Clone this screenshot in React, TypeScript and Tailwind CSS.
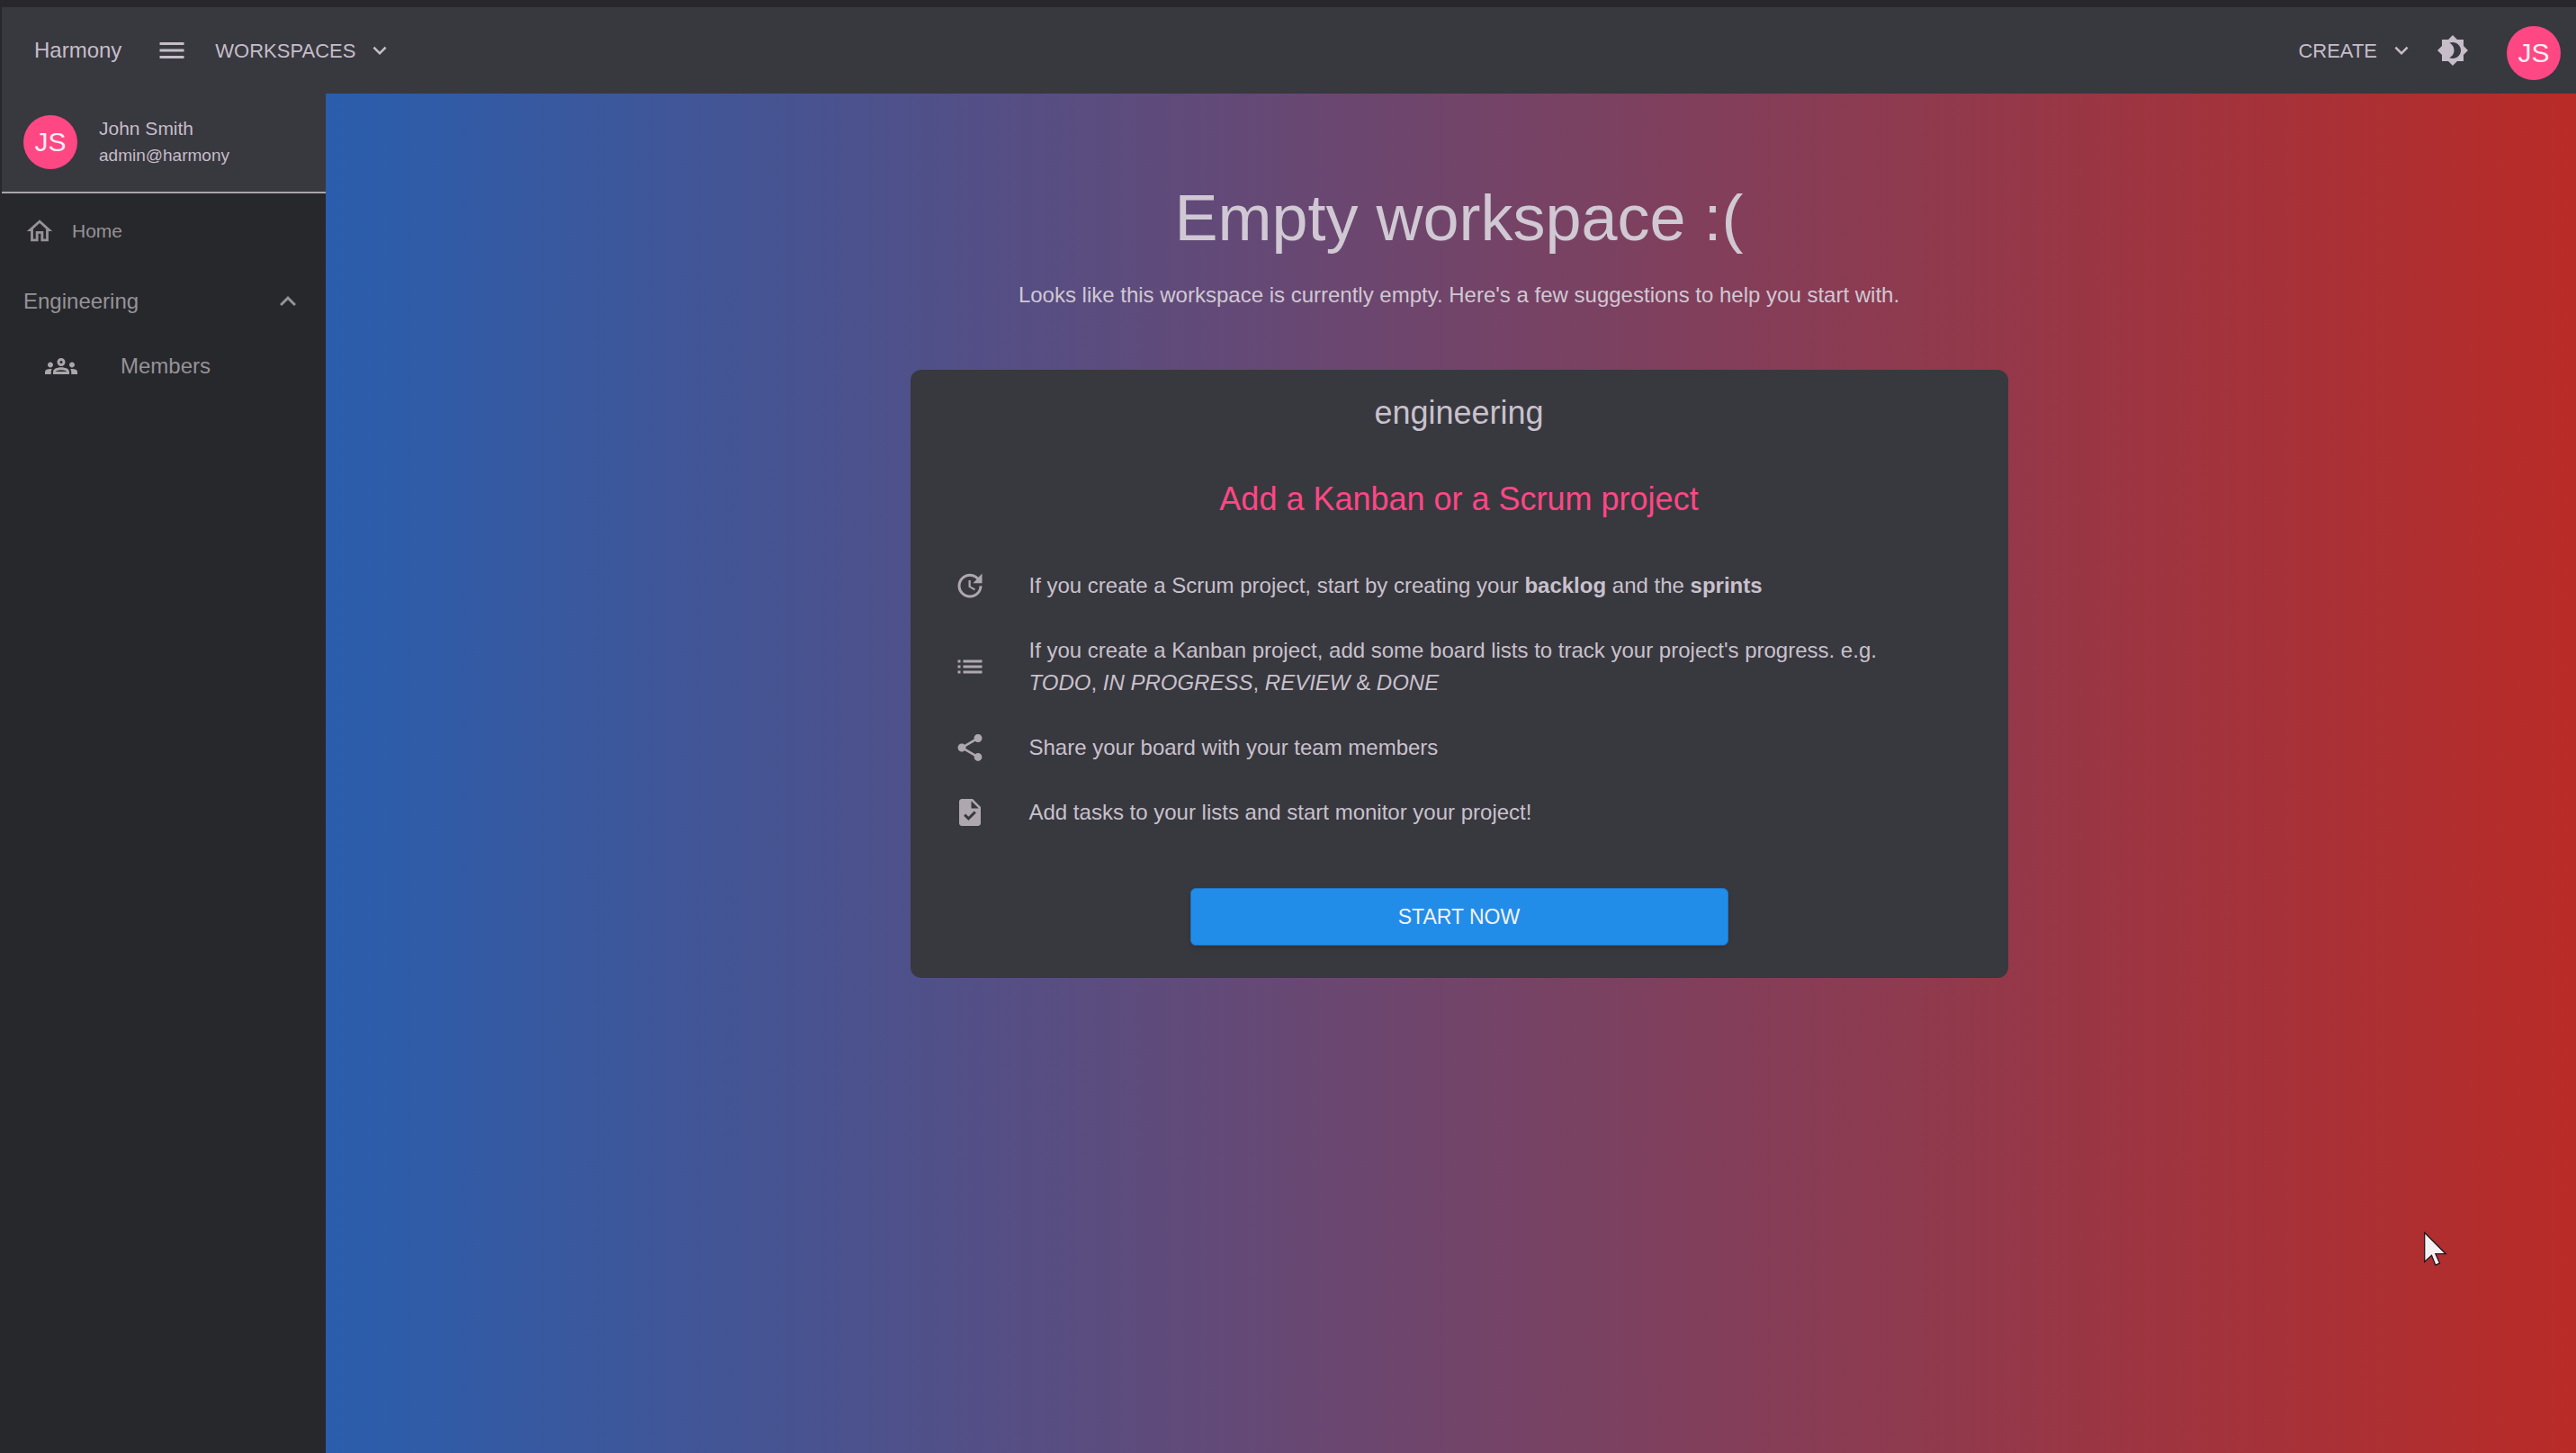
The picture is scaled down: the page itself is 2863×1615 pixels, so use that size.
import type { ReactNode } from "react";
import {
  MdBrightness4,
  MdExpandLess,
  MdExpandMore,
  MdList,
  MdMenu,
  MdOutlineGroups,
  MdOutlineHome,
  MdShare,
  MdTask,
  MdUpdate,
} from "react-icons/md";

function Avatar() {
  return (
    <span className="flex size-[60px] shrink-0 items-center justify-center rounded-full bg-[#ff4784] text-[30px] leading-none text-[#f7eef3]">
      JS
    </span>
  );
}

function TopBar() {
  return (
    <header className="flex h-24 items-center justify-between bg-[#38383f] pr-[17px] pl-9 text-[#c6bdc9]">
      <div className="flex items-center">
        <a href="#" className="text-2xl">
          Harmony
        </a>
        <button type="button" aria-label="Toggle menu" className="ml-[38px]">
          <MdMenu size={36} />
        </button>
        <button type="button" className="ml-[30px] flex items-center gap-3 text-[22px]">
          WORKSPACES
          <MdExpandMore size={30} />
        </button>
      </div>
      <div className="flex items-center">
        <button type="button" className="flex items-center gap-3 text-[22px]">
          CREATE
          <MdExpandMore size={30} />
        </button>
        <button type="button" aria-label="Toggle theme" className="ml-6">
          <MdBrightness4 size={36} />
        </button>
        <button type="button" aria-label="Account" className="mt-[6px] ml-[42px]">
          <Avatar />
        </button>
      </div>
    </header>
  );
}

function Sidebar() {
  return (
    <aside className="flex w-[360px] shrink-0 flex-col bg-[#27282c] text-[#969296]">
      <div className="flex h-[111px] items-start gap-6 border-b-2 border-[#a9a5aa] bg-[#38383f] pt-6 pl-6 text-[#c6bdc9]">
        <Avatar />
        <div>
          <p className="text-[21px] leading-[30px]">John Smith</p>
          <p className="text-[19px] leading-[30px]">admin@harmony</p>
        </div>
      </div>
      <nav className="flex flex-col">
        <a href="#" className="mt-[18px] flex h-12 items-center gap-[19px] pl-[25px] text-[21px]">
          <MdOutlineHome size={34} />
          Home
        </a>
        <button type="button" className="mt-6 flex h-[60px] items-center justify-between pr-6 pl-6 text-2xl">
          Engineering
          <MdExpandLess size={36} />
        </button>
        <a href="#" className="mt-1 flex h-[76px] items-center gap-12 pl-12 text-2xl">
          <MdOutlineGroups size={36} className="text-[#aaa6aa]" />
          Members
        </a>
      </nav>
    </aside>
  );
}

function Step({ icon, children }: { icon: ReactNode; children: ReactNode }) {
  return (
    <li className="flex items-center py-[18px] pr-12 pl-6">
      <span className="w-[84px] shrink-0 text-[#aea8ae]">{icon}</span>
      <p className="text-2xl leading-9">{children}</p>
    </li>
  );
}

function StarterCard() {
  return (
    <section className="mt-[65px] flex w-full max-w-[1220px] flex-col items-center rounded-xl bg-[#38383f] px-3 pt-6 pb-9 text-[#c9c1cc]">
      <h2 className="text-4xl leading-[48px]">engineering</h2>
      <h3 className="mt-12 text-4xl leading-[48px] text-[#ff4784]">Add a Kanban or a Scrum project</h3>
      <ul className="mt-9 w-full px-3">
        <Step icon={<MdUpdate size={36} />}>
          If you create a Scrum project, start by creating your <b>backlog</b> and the <b>sprints</b>
        </Step>
        <Step icon={<MdList size={36} />}>
          If you create a Kanban project, add some board lists to track your project's progress. e.g. <i>TODO</i>,{" "}
          <i>IN PROGRESS</i>, <i>REVIEW</i> &amp; <i>DONE</i>
        </Step>
        <Step icon={<MdShare size={36} />}>Share your board with your team members</Step>
        <Step icon={<MdTask size={36} />}>Add tasks to your lists and start monitor your project!</Step>
      </ul>
      <button
        type="button"
        className="mt-12 h-16 w-1/2 rounded-md border border-[#1c75c8] bg-[#218de8] text-[23px] text-[#f4f1f8] shadow-md"
      >
        START NOW
      </button>
    </section>
  );
}

function Pointer() {
  return (
    <svg
      aria-hidden="true"
      viewBox="0 0 26 39"
      className="pointer-events-none absolute top-[84.7%] left-[94.1%] h-[39px] w-[26px]"
    >
      <path
        d="M.7 1v32.5l7.8-7.2 4.3 10.8 4.7-2-4.6-10.4h11.4z"
        fill="#f4f1f2"
        stroke="#20161c"
        strokeWidth="1.3"
      />
    </svg>
  );
}

export default function App() {
  return (
    <div className="relative flex min-h-screen flex-col border-t-8 border-l-2 border-[#28272c] bg-linear-to-r/srgb from-[#1565c0] to-[#b92b27] font-['Liberation_Sans',Arial,sans-serif]">
      <TopBar />
      <div className="flex grow">
        <Sidebar />
        <main className="flex grow flex-col items-center pt-24 pl-[18px] text-[#d0c8d3]">
          <h1 className="text-7xl leading-[84px]">Empty workspace :(</h1>
          <p className="mt-[26px] text-2xl leading-9">
            Looks like this workspace is currently empty. Here's a few suggestions to help you start with.
          </p>
          <StarterCard />
        </main>
      </div>
      <Pointer />
    </div>
  );
}
